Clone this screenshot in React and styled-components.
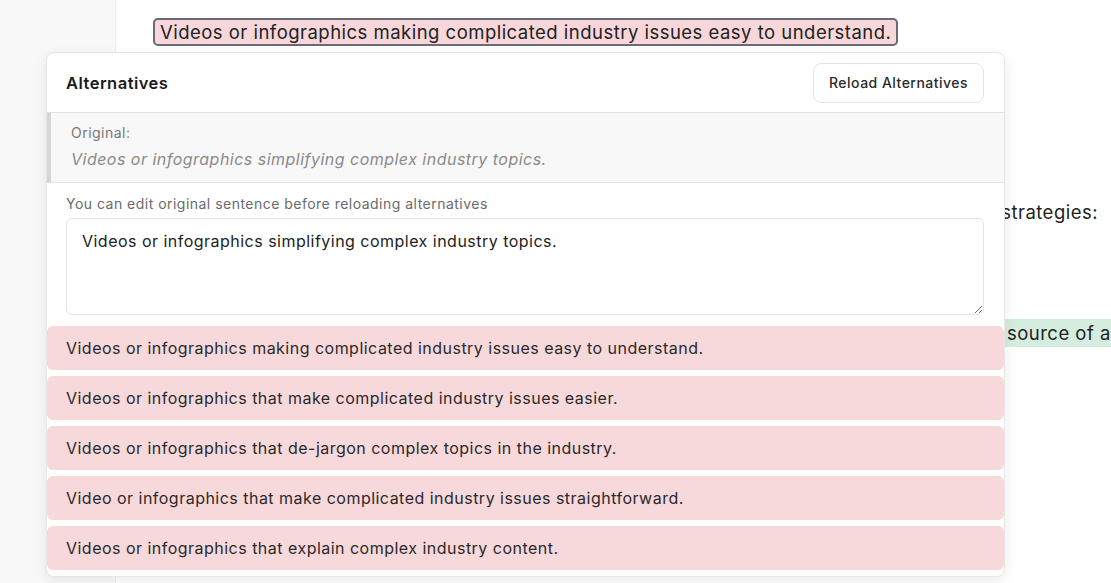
import React from 'react'
import styled, { createGlobalStyle } from 'styled-components'

const alternatives = [
  'Videos or infographics making complicated industry issues easy to understand.',
  'Videos or infographics that make complicated industry issues easier.',
  'Videos or infographics that de-jargon complex topics in the industry.',
  'Video or infographics that make complicated industry issues straightforward.',
  'Videos or infographics that explain complex industry content.',
]

export default function App() {
  return (
    <>
      <Global />
      <Page>
        <Sidebar />
        <Main>
          <DocLine>
            <Marked>Videos or infographics making complicated industry issues easy to understand.</Marked>
          </DocLine>
          <DocLine right>Build trust with your audience through these strategies:</DocLine>
          <DocLine indent>
            <Green>source of authority in your industry.</Green>
          </DocLine>

          <Popover>
            <Header>
              <Title>Alternatives</Title>
              <ReloadButton>Reload Alternatives</ReloadButton>
            </Header>
            <Original>
              <SmallLabel>Original:</SmallLabel>
              <OriginalText>Videos or infographics simplifying complex industry topics.</OriginalText>
            </Original>
            <EditBox>
              <SmallLabel dark>You can edit original sentence before reloading alternatives</SmallLabel>
              <Area defaultValue="Videos or infographics simplifying complex industry topics." />
            </EditBox>
            <List>
              {alternatives.map((a, i) => (
                <Item key={i}>{a}</Item>
              ))}
            </List>
          </Popover>
        </Main>
      </Page>
    </>
  )
}

const Global = createGlobalStyle`
  html, body { margin: 0; padding: 0; background: #fff; }
  body { font-family: Inter, "Noto Sans", sans-serif; color: #222; letter-spacing: 0.03em; }
`

const Page = styled.div`
  display: flex;
  width: 1111px;
  height: 583px;
  overflow: hidden;
`

const Sidebar = styled.div`
  width: 115px;
  flex-shrink: 0;
  background: #f8f8f8;
  border-right: 1px solid #ececec;
`

const Main = styled.div`
  position: relative;
  flex: 1;
  min-width: 0;
  padding: 18px 0 0 37px;
  display: flex;
  flex-direction: column;
`

const DocLine = styled.div`
  font-size: 18.5px;
  line-height: 29px;
  color: #222;
  white-space: nowrap;
  overflow: hidden;
  text-align: ${p => (p.right ? 'right' : 'left')};
  padding-right: ${p => (p.right ? '13px' : '0')};
  padding-left: ${p => (p.indent ? '850px' : '0')};
  margin-top: ${p => (p.right ? '151px' : p.indent ? '92px' : '0')};
`

const Marked = styled.span`
  background: #f8d7da;
  border: 2px solid #6b6b78;
  border-radius: 5px;
  padding: 1px 5px;
`

const Green = styled.span`
  background: #d5eddf;
  padding: 3px 4px;
`

const Popover = styled.div`
  position: absolute;
  left: -70px;
  top: 52px;
  width: 957px;
  background: #fff;
  border: 1px solid #e6e6e6;
  border-radius: 8px;
  box-shadow: 0 4px 14px rgba(0, 0, 0, 0.08);
  padding-bottom: 6px;
  overflow: hidden;
`

const Header = styled.div`
  display: flex;
  align-items: center;
  justify-content: space-between;
  height: 59px;
  padding: 0 20px 0 19px;
  border-bottom: 1px solid #e3e3e3;
`

const Title = styled.div`
  font-size: 16.5px;
  font-weight: 600;
  color: #1a1a1a;
`

const ReloadButton = styled.button`
  font-family: inherit;
  letter-spacing: inherit;
  font-size: 14px;
  font-weight: 500;
  color: #2a2a2a;
  background: #fff;
  border: 1px solid #e3e3e3;
  border-radius: 8px;
  height: 40px;
  padding: 0 15px;
`

const Original = styled.div`
  background: #f8f8f8;
  border-left: 4px solid #d6d6d6;
  border-bottom: 1px solid #e3e3e3;
  padding: 11px 20px 13px 20px;
  display: flex;
  flex-direction: column;
  gap: 8px;
`

const SmallLabel = styled.div`
  font-size: 14px;
  color: ${p => (p.dark ? '#6a6a6a' : '#777')};
`

const OriginalText = styled.div`
  font-size: 16px;
  font-style: italic;
  color: #8a8a8a;
`

const EditBox = styled.div`
  padding: 12px 20px 11px 19px;
  display: flex;
  flex-direction: column;
  gap: 6px;
`

const Area = styled.textarea`
  font-family: inherit;
  letter-spacing: inherit;
  font-size: 16px;
  color: #222;
  height: 97px;
  box-sizing: border-box;
  padding: 12px 15px;
  border: 1px solid #e3e3e3;
  border-radius: 6px;
  resize: vertical;
  outline: none;
`

const List = styled.div`
  display: flex;
  flex-direction: column;
  gap: 6px;
`

const Item = styled.div`
  background: #f7d8db;
  border-radius: 6px;
  height: 44px;
  display: flex;
  align-items: center;
  padding: 0 19px;
  font-size: 16px;
  color: #2a2a2a;
`
